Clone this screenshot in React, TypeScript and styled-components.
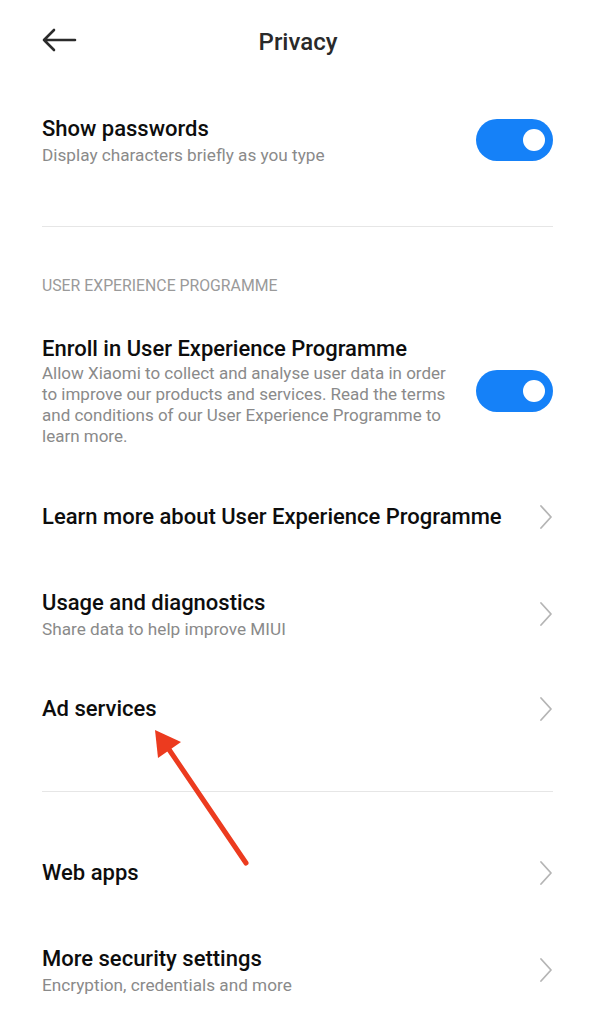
import styled, { createGlobalStyle } from "styled-components"

const GlobalStyle = createGlobalStyle`
  html, body {
    margin: 0;
    padding: 0;
    background: #ffffff;
  }
  body {
    font-family: Roboto, "Noto Sans", "Liberation Sans", sans-serif;
    -webkit-font-smoothing: antialiased;
  }
`

type ToggleItem = { title: string; subtitle: string }
type NavItem = { title: string; subtitle?: string; height: number }

const ChevronIcon = () => (
  <svg width="14" height="26" viewBox="0 0 14 26" fill="none">
    <polyline
      points="2,2 12,13 2,24"
      stroke="#b5b5b5"
      strokeWidth="1.8"
      strokeLinecap="round"
      strokeLinejoin="round"
    />
  </svg>
)

const BackIcon = () => (
  <svg width="36" height="24" viewBox="0 0 36 24" fill="none">
    <path
      d="M34 12H3M13 2L3 12l10 10"
      stroke="#2b2b2b"
      strokeWidth="2.6"
      strokeLinecap="round"
      strokeLinejoin="round"
    />
  </svg>
)

function App() {
  const topToggle: ToggleItem = {
    title: "Show passwords",
    subtitle: "Display characters briefly as you type",
  }

  const navItems: NavItem[] = [
    { title: "Learn more about User Experience Programme", height: 100 },
    {
      title: "Usage and diagnostics",
      subtitle: "Share data to help improve MIUI",
      height: 94,
    },
    { title: "Ad services", height: 96 },
  ]

  const bottomItems: NavItem[] = [
    { title: "Web apps", height: 96 },
    {
      title: "More security settings",
      subtitle: "Encryption, credentials and more",
      height: 98,
    },
  ]

  return (
    <>
      <GlobalStyle />
      <Page>
        <Header>
          <BackButton>
            <BackIcon />
          </BackButton>
          <HeaderTitle>Privacy</HeaderTitle>
        </Header>

        <Row $height={112}>
          <TextBlock>
            <Title>{topToggle.title}</Title>
            <Subtitle>{topToggle.subtitle}</Subtitle>
          </TextBlock>
          <Switch $on>
            <Knob />
          </Switch>
        </Row>

        <DividerWrap $height={60}>
          <Line />
        </DividerWrap>

        <SectionLabel>USER EXPERIENCE PROGRAMME</SectionLabel>

        <EnrollRow>
          <TextBlock>
            <Title>Enroll in User Experience Programme</Title>
            <Description>
              Allow Xiaomi to collect and analyse user data in order to improve
              our products and services. Read the terms and conditions of our
              User Experience Programme to learn more.
            </Description>
          </TextBlock>
          <Switch $on>
            <Knob />
          </Switch>
        </EnrollRow>

        {navItems.map((item) => (
          <Row key={item.title} $height={item.height}>
            <TextBlock>
              <Title>{item.title}</Title>
              {item.subtitle && <Subtitle>{item.subtitle}</Subtitle>}
            </TextBlock>
            <ChevronIcon />
          </Row>
        ))}

        <DividerWrap $height={68}>
          <Line />
        </DividerWrap>

        {bottomItems.map((item) => (
          <Row key={item.title} $height={item.height}>
            <TextBlock>
              <Title>{item.title}</Title>
              {item.subtitle && <Subtitle>{item.subtitle}</Subtitle>}
            </TextBlock>
            <ChevronIcon />
          </Row>
        ))}

        <Annotation width="596" height="1024" viewBox="0 0 596 1024">
          <line
            x1="168"
            y1="748"
            x2="246"
            y2="863"
            stroke="#ec3b1f"
            strokeWidth="5"
            strokeLinecap="round"
          />
          <polygon points="155,730 181,742 158,758" fill="#ec3b1f" />
        </Annotation>
      </Page>
    </>
  )
}

const Page = styled.div`
  position: relative;
  width: 596px;
  height: 1024px;
  overflow: hidden;
  background: #ffffff;
  display: flex;
  flex-direction: column;
`

const Header = styled.header`
  position: relative;
  height: 84px;
  display: flex;
  align-items: center;
  justify-content: center;
  padding: 0 42px;
`

const BackButton = styled.div`
  position: absolute;
  left: 41px;
  top: 28px;
  display: flex;
`

const HeaderTitle = styled.h1`
  margin: 0;
  font-size: 24px;
  font-weight: 500;
  color: #2a2a2a;
`

const Row = styled.div<{ $height: number }>`
  height: ${({ $height }) => $height}px;
  flex-shrink: 0;
  display: flex;
  align-items: center;
  justify-content: space-between;
  padding: 0 43px 0 42px;
  gap: 20px;
`

const EnrollRow = styled(Row).attrs({ $height: 153 })`
  align-items: center;
`

const TextBlock = styled.div`
  display: flex;
  flex-direction: column;
  min-width: 0;
`

const Title = styled.div`
  font-size: 22px;
  line-height: 28px;
  color: #0d0d0d;
  font-weight: 500;
  white-space: nowrap;
`

const Subtitle = styled.div`
  margin-top: 1px;
  font-size: 17.2px;
  line-height: 22px;
  color: #8a8a8a;
`

const Description = styled.div`
  margin-top: 0;
  font-size: 17px;
  line-height: 21px;
  color: #8a8a8a;
  max-width: 412px;
`

const SectionLabel = styled.div`
  height: 58px;
  flex-shrink: 0;
  display: flex;
  align-items: center;
  padding: 0 42px;
  font-size: 15.8px;
  color: #9a9a9a;
`

const DividerWrap = styled.div<{ $height: number }>`
  height: ${({ $height }) => $height}px;
  flex-shrink: 0;
  display: flex;
  align-items: center;
  padding: 0 43px 0 42px;
`

const Line = styled.div`
  flex: 1;
  height: 1px;
  background: #e6e6e6;
`

const Switch = styled.div<{ $on?: boolean }>`
  flex-shrink: 0;
  width: 77px;
  height: 42px;
  border-radius: 21px;
  background: ${({ $on }) => ($on ? "#1581f8" : "#d9d9d9")};
  display: flex;
  align-items: center;
  justify-content: ${({ $on }) => ($on ? "flex-end" : "flex-start")};
  padding: 0 8px;
  box-sizing: border-box;
`

const Knob = styled.div`
  width: 22px;
  height: 22px;
  border-radius: 50%;
  background: #ffffff;
`

const Annotation = styled.svg`
  position: absolute;
  left: 0;
  top: 0;
  pointer-events: none;
`

export default App
